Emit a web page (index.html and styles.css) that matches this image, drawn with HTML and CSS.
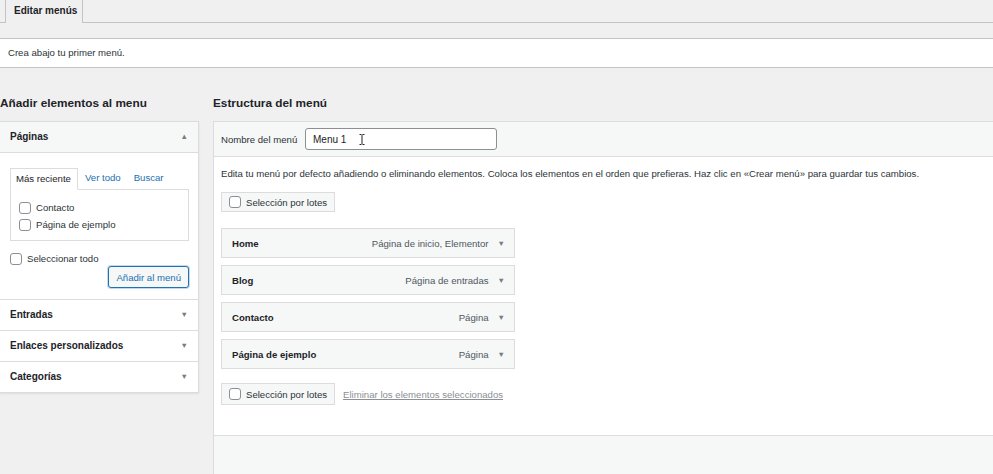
FILE: index.html
```html
<!DOCTYPE html>
<html lang="es">
<head>
    <meta charset="UTF-8">
    <meta name="viewport" content="width=device-width, initial-scale=1.0">
    <title>Menús</title>
    <link rel="stylesheet" href="styles.css">
</head>
<body>
    <nav class="nav-tabs">
        <a class="nav-tab active">Editar menús</a>
    </nav>

    <div class="notice">Crea abajo tu primer menú.</div>

    <div class="columns">
        <div class="col-left">
            <h2>Añadir elementos al menu</h2>
            <div class="accordion">
                <div class="acc-section open">
                    <div class="acc-title">Páginas <span class="arrow">&#9650;</span></div>
                    <div class="acc-content">
                        <ul class="tabs">
                            <li class="tab active">Más reciente</li>
                            <li class="tab">Ver todo</li>
                            <li class="tab">Buscar</li>
                        </ul>
                        <div class="tab-panel">
                            <label class="check"><span class="box"></span>Contacto</label>
                            <label class="check"><span class="box"></span>Página de ejemplo</label>
                        </div>
                        <label class="check select-all"><span class="box"></span>Seleccionar todo</label>
                        <div class="add-row">
                            <button class="btn-secondary">Añadir al menú</button>
                        </div>
                    </div>
                </div>
                <div class="acc-section">
                    <div class="acc-title">Entradas <span class="arrow">&#9660;</span></div>
                </div>
                <div class="acc-section">
                    <div class="acc-title">Enlaces personalizados <span class="arrow">&#9660;</span></div>
                </div>
                <div class="acc-section">
                    <div class="acc-title">Categorías <span class="arrow">&#9660;</span></div>
                </div>
            </div>
        </div>

        <div class="col-right">
            <h2>Estructura del menú</h2>
            <div class="menu-box">
                <div class="menu-header">
                    <label class="name-label">Nombre del menú</label>
                    <div class="name-input">Menu 1
                        <svg class="ibeam" width="6" height="11" viewBox="0 0 6 11"><path d="M0.5 0.5h2M3.5 0.5h2M3 1v9M0.5 10.5h2M3.5 10.5h2" stroke="#222" stroke-width="1" fill="none"/></svg>
                    </div>
                </div>
                <div class="menu-body">
                    <p class="desc">Edita tu menú por defecto añadiendo o eliminando elementos. Coloca los elementos en el orden que prefieras. Haz clic en «Crear menú» para guardar tus cambios.</p>
                    <div class="bulk"><span class="box"></span>Selección por lotes</div>

                    <ul class="menu-items">
                        <li class="item"><span class="item-title">Home</span><span class="item-type">Página de inicio, Elementor</span><span class="arrow">&#9660;</span></li>
                        <li class="item"><span class="item-title">Blog</span><span class="item-type">Página de entradas</span><span class="arrow">&#9660;</span></li>
                        <li class="item"><span class="item-title">Contacto</span><span class="item-type">Página</span><span class="arrow">&#9660;</span></li>
                        <li class="item"><span class="item-title">Página de ejemplo</span><span class="item-type">Página</span><span class="arrow">&#9660;</span></li>
                    </ul>

                    <div class="bulk-row">
                        <div class="bulk"><span class="box"></span>Selección por lotes</div>
                        <a class="delete-link">Eliminar los elementos seleccionados</a>
                    </div>
                </div>
                <div class="menu-footer"></div>
            </div>
        </div>
    </div>
</body>
</html>
```

FILE: styles.css
```css
body {
    font-family: 'Liberation Sans', Arial, sans-serif;
    font-size: 9.6px;
    margin: 0;
    padding: 0;
    background-color: #f0f0f1;
    color: #1d2327;
    overflow: hidden;
}
.nav-tabs {
    height: 22px;
    border-bottom: 1px solid #c3c4c7;
    padding-left: 5px;
    display: flex;
    align-items: flex-end;
}
.nav-tab {
    display: block;
    height: 23px;
    box-sizing: border-box;
    padding: 5px 5px 0 8px;
    border: 1px solid #c3c4c7;
    border-top: none;
    border-bottom: none;
    font-weight: bold;
    font-size: 10px;
    margin-bottom: -1px;
    background-color: #f0f0f1;
}
.notice {
    margin-top: 15px;
    height: 28px;
    line-height: 28px;
    background-color: white;
    border-top: 1px solid #c3c4c7;
    border-bottom: 1px solid #c3c4c7;
    padding-left: 8px;
    color: #2c3338;
}
.columns {
    display: flex;
    margin-top: 28px;
}
h2 {
    font-size: 11.8px;
    margin: 0 0 10px 0;
    height: 15px;
    line-height: 15px;
    color: #1d2327;
}
.col-left {
    width: 199px;
    flex-shrink: 0;
}
.col-right {
    margin-left: 14px;
    flex: 1;
}
.accordion {
    background-color: white;
    border: 1px solid #dcdcde;
    border-left: none;
    box-shadow: 0 1px 2px rgba(0, 0, 0, 0.08);
}
.acc-title {
    height: 30px;
    line-height: 30px;
    padding: 0 10px;
    font-weight: bold;
    font-size: 10px;
    color: #1d2327;
    display: flex;
    justify-content: space-between;
}
.acc-section + .acc-section {
    border-top: 1px solid #dcdcde;
}
.acc-section.open .acc-title {
    background-color: #f6f7f7;
    border-bottom: 1px solid #dcdcde;
}
.arrow {
    font-size: 7.5px;
    color: #787c82;
    font-weight: normal;
}
.acc-content {
    padding: 15px 9px 11px 10px;
}
.tabs {
    list-style: none;
    margin: 0;
    padding: 0;
    display: flex;
}
.tab {
    height: 20px;
    line-height: 20px;
    padding: 0 6px;
    color: #2271b1;
    margin-right: 1px;
}
.tab.active {
    color: #1d2327;
    border: 1px solid #dcdcde;
    border-bottom: 1px solid white;
    margin-bottom: -1px;
    padding: 0 6px 0 5px;
}
.tab-panel {
    border: 1px solid #dcdcde;
    box-sizing: border-box;
    height: 52px;
    padding: 9px 0 0 8px;
}
.check {
    display: flex;
    align-items: center;
    height: 17px;
    color: #2c3338;
}
.box {
    display: inline-block;
    width: 10px;
    height: 10px;
    border: 1px solid #8c8f94;
    border-radius: 3px;
    background-color: white;
    margin-right: 5px;
}
.select-all {
    margin-top: 9px;
}
.add-row {
    display: flex;
    justify-content: flex-end;
    margin-top: -1px;
}
.btn-secondary {
    font-family: inherit;
    font-size: 9.6px;
    color: #2271b1;
    background-color: #f6f7f7;
    border: 1px solid #2271b1;
    border-radius: 3px;
    height: 22px;
    padding: 0 7px;
    box-shadow: 0 0 0 1px #c5d9ed;
}
.menu-box {
    border: 1px solid #dcdcde;
    border-right: none;
    background-color: white;
}
.menu-header {
    height: 34px;
    background-color: #f6f7f7;
    border-bottom: 1px solid #dcdcde;
    display: flex;
    align-items: center;
    padding-left: 7px;
}
.name-label {
    color: #2c3338;
    width: 84px;
}
.name-input {
    width: 192px;
    height: 22px;
    box-sizing: border-box;
    border: 1px solid #8c8f94;
    border-radius: 3px;
    background-color: white;
    padding-left: 7px;
    display: flex;
    align-items: center;
    font-size: 10px;
}
.ibeam {
    margin-left: 13px;
}
.menu-body {
    padding: 11px 7px 29px 7px;
    height: 238px;
}
.desc {
    margin: 0 0 12px 0;
    color: #2c3338;
    line-height: 12px;
}
.bulk {
    display: inline-flex;
    align-items: center;
    height: 20px;
    box-sizing: border-box;
    padding: 0 7px;
    background-color: #f6f7f7;
    border: 1px solid #dcdcde;
    color: #2c3338;
}
.menu-items {
    list-style: none;
    margin: 16px 0 0 0;
    padding: 0;
    width: 294px;
}
.item {
    height: 30px;
    box-sizing: border-box;
    border: 1px solid #dcdcde;
    background-color: #f6f7f7;
    display: flex;
    align-items: center;
    padding: 0 9px 0 10px;
    margin-bottom: 7px;
}
.item-title {
    font-weight: bold;
    flex: 1;
}
.item-type {
    color: #50575e;
    margin-right: 9px;
}
.bulk-row {
    display: flex;
    align-items: center;
    margin-top: 14px;
}
.bulk-row .bulk {
    height: 22px;
}
.delete-link {
    margin-left: 8px;
    color: #8c8f94;
    text-decoration: underline;
}
.menu-footer {
    height: 38px;
    background-color: #f6f7f7;
    border-top: 1px solid #dcdcde;
}
```
